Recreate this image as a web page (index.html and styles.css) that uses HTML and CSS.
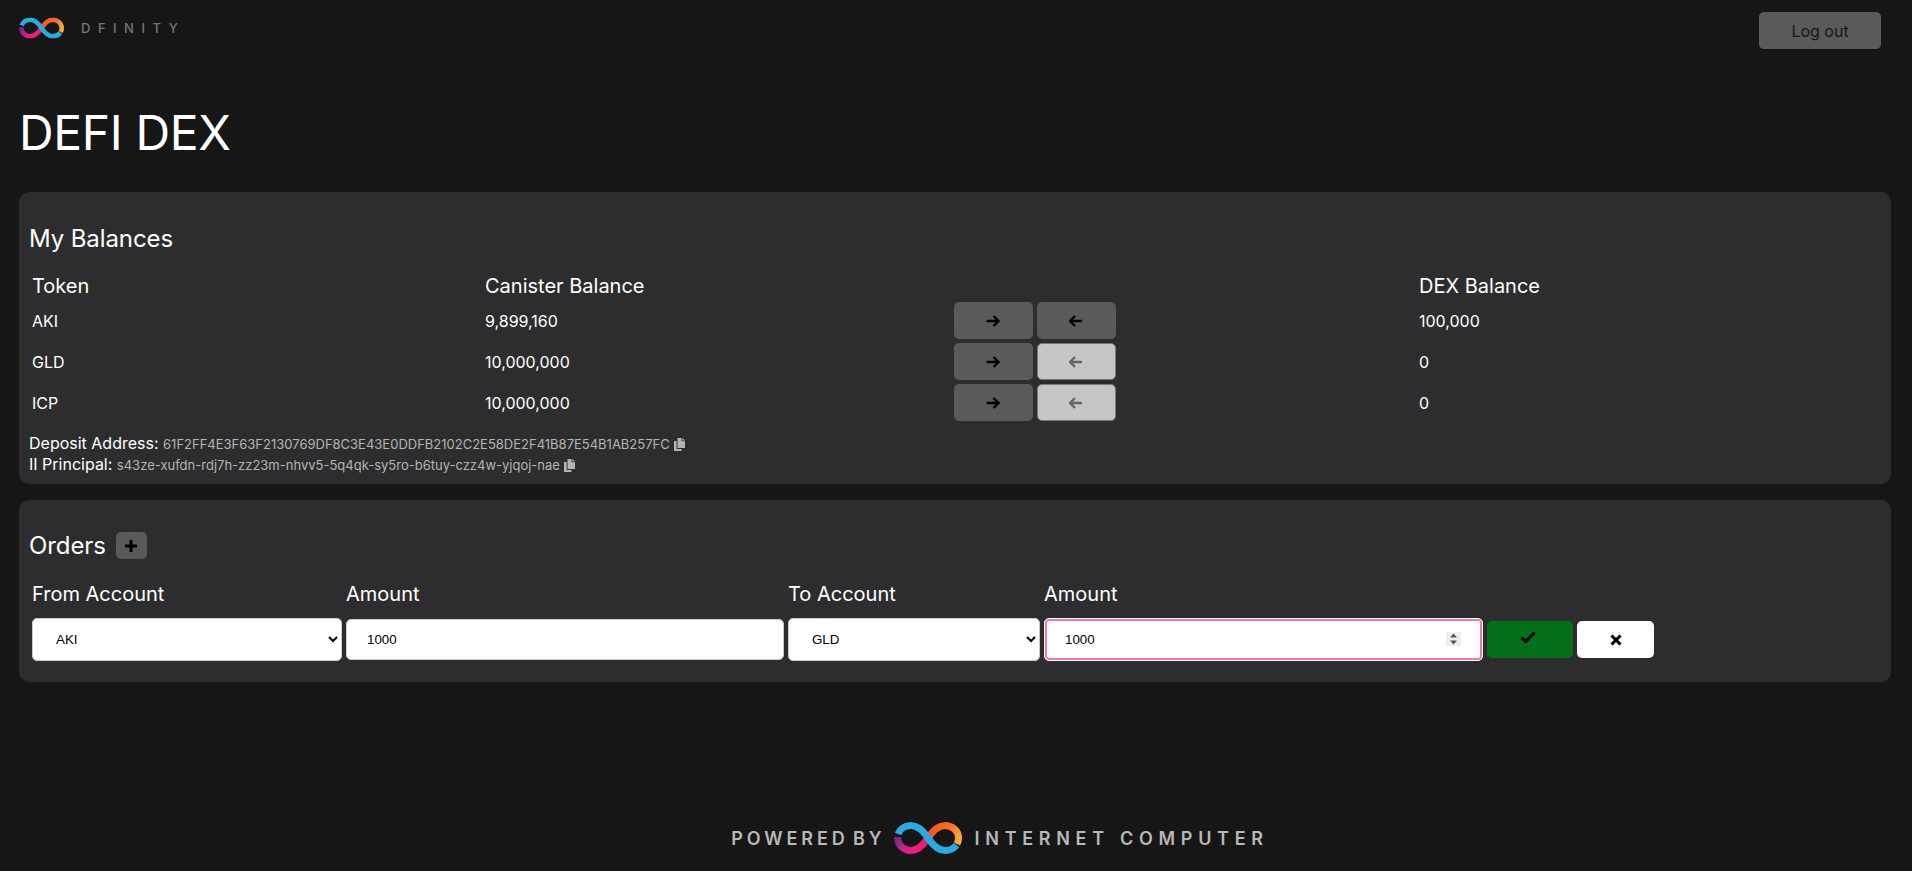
FILE: index.html
```html
<!DOCTYPE html>
<html>
    <head>
        <title>DEFI DEX</title>
        <link rel="stylesheet" href="styles.css">
    </head>
    <body>
        <header class="topbar">
            <div class="brand">
                <svg class="logo-small" viewBox="0 0 68 32">
                    <defs>
                        <linearGradient id="warm-left" gradientUnits="userSpaceOnUse" x1="3" y1="8" x2="26" y2="28">
                            <stop offset="0" stop-color="#522785"/>
                            <stop offset="0.55" stop-color="#c2258a"/>
                            <stop offset="0.8" stop-color="#ed1e79"/>
                        </linearGradient>
                        <linearGradient id="warm-right" gradientUnits="userSpaceOnUse" x1="38" y1="8" x2="65" y2="20">
                            <stop offset="0" stop-color="#f15a24"/>
                            <stop offset="0.55" stop-color="#f7702a"/>
                            <stop offset="1" stop-color="#fbb03b"/>
                        </linearGradient>
                        <symbol id="infinity" viewBox="0 0 68 32">
                            <path d="M3.500 15C3.500 23 9.500 28.500 17 28.500C25 28.500 30 22 34 16" fill="none" stroke="url(#warm-left)" stroke-width="7"/>
                            <path d="M34 16C38 10 43 3.500 51 3.500C58.500 3.500 64.500 9 64.500 16C64.500 18 64 20 63 22" fill="none" stroke="url(#warm-right)" stroke-width="7"/>
                            <path d="M4 12C6 7 11 3.500 17 3.500C25 3.500 30 10 34 16C38 22 43 28.500 51 28.500C56 28.500 60 26.500 62.500 23" fill="none" stroke="#29abe2" stroke-width="7"/>
                        </symbol>
                    </defs>
                    <use href="#infinity"/>
                </svg>
                <span class="brand-name">DFINITY</span>
            </div>
            <button class="btn logout">Log out</button>
        </header>

        <h1 class="title">DEFI DEX</h1>

        <section class="panel balances">
            <h2>My Balances</h2>
            <table class="balance-table">
                <colgroup>
                    <col class="col-token">
                    <col class="col-canister">
                    <col class="col-move">
                    <col>
                </colgroup>
                <thead>
                    <tr><th>Token</th><th>Canister Balance</th><th></th><th>DEX Balance</th></tr>
                </thead>
                <tbody>
                    <tr>
                        <td>AKI</td>
                        <td>9,899,160</td>
                        <td>
                            <div class="move">
                                <button class="btn move-btn"><svg class="arrow" viewBox="0 0 14 12"><path d="M0.500 6H12M7.500 1L12.500 6L7.500 11"/></svg></button>
                                <button class="btn move-btn"><svg class="arrow" viewBox="0 0 14 12"><path d="M13 6H1.500M6 1L1 6L6 11"/></svg></button>
                            </div>
                        </td>
                        <td>100,000</td>
                    </tr>
                    <tr>
                        <td>GLD</td>
                        <td>10,000,000</td>
                        <td>
                            <div class="move">
                                <button class="btn move-btn"><svg class="arrow" viewBox="0 0 14 12"><path d="M0.500 6H12M7.500 1L12.500 6L7.500 11"/></svg></button>
                                <button class="btn move-btn off"><svg class="arrow" viewBox="0 0 14 12"><path d="M13 6H1.500M6 1L1 6L6 11"/></svg></button>
                            </div>
                        </td>
                        <td>0</td>
                    </tr>
                    <tr>
                        <td>ICP</td>
                        <td>10,000,000</td>
                        <td>
                            <div class="move">
                                <button class="btn move-btn"><svg class="arrow" viewBox="0 0 14 12"><path d="M0.500 6H12M7.500 1L12.500 6L7.500 11"/></svg></button>
                                <button class="btn move-btn off"><svg class="arrow" viewBox="0 0 14 12"><path d="M13 6H1.500M6 1L1 6L6 11"/></svg></button>
                            </div>
                        </td>
                        <td>0</td>
                    </tr>
                </tbody>
            </table>
            <div class="ids">
                <div>Deposit Address: <span class="id-value">61F2FF4E3F63F2130769DF8C3E43E0DDFB2102C2E58DE2F41B87E54B1AB257FC</span>
                    <svg class="copy" viewBox="0 0 11 13"><path d="M3.500 0H7.500V3.200H11V10H3.500ZM8.300 0L11 2.400H8.300ZM0 3H2.600V11H7.500V13H0Z"/></svg></div>
                <div>II Principal: <span class="id-value">s43ze-xufdn-rdj7h-zz23m-nhvv5-5q4qk-sy5ro-b6tuy-czz4w-yjqoj-nae</span>
                    <svg class="copy" viewBox="0 0 11 13"><path d="M3.500 0H7.500V3.200H11V10H3.500ZM8.300 0L11 2.400H8.300ZM0 3H2.600V11H7.500V13H0Z"/></svg></div>
            </div>
        </section>

        <section class="panel orders">
            <div class="orders-head">
                <h2>Orders</h2>
                <button class="btn add"><svg class="plus" viewBox="0 0 14 14"><path d="M7 1V13M1 7H13"/></svg></button>
            </div>
            <form class="order-form">
                <label>From Account</label>
                <label>Amount</label>
                <label>To Account</label>
                <label class="wide">Amount</label>
                <select class="field"><option>AKI</option></select>
                <input class="field short" type="text" value="1000">
                <select class="field"><option>GLD</option></select>
                <input class="field focused" type="number" value="1000">
                <button class="btn ok" type="button"><svg class="check" viewBox="0 0 16 12"><path d="M1.500 6.500L5.800 10.500L14.500 1.500"/></svg></button>
                <button class="btn cancel" type="button"><svg class="cross" viewBox="0 0 12 12"><path d="M1.500 1.500L10.500 10.500M10.500 1.500L1.500 10.500"/></svg></button>
            </form>
        </section>

        <footer class="footer">
            <span class="powered">POWERED BY</span>
            <svg class="logo-big" viewBox="0 0 68 32"><use href="#infinity"/></svg>
            <span class="ic">INTERNET COMPUTER</span>
        </footer>
    </body>
</html>
```

FILE: styles.css
```css
html, body {
    margin: 0;
    height: 100%;
}

body {
    background: #161617;
    color: #fff;
    font-family: Inter, sans-serif;
    font-size: 16px;
    display: flex;
    flex-direction: column;
    min-height: 871px;
    box-sizing: border-box;
    padding: 0 21px 0 19px;
    overflow: hidden;
}

/* top bar */
.topbar {
    display: flex;
    justify-content: space-between;
    align-items: flex-start;
    height: 49px;
    padding: 12px 10px 0 0;
    box-sizing: border-box;
}

.brand {
    display: flex;
    align-items: center;
    margin-top: 5px;
}

.logo-small {
    width: 45px;
    height: 22px;
}

.brand-name {
    margin-left: 17px;
    color: #77777a;
    font-size: 13px;
    font-weight: 500;
    letter-spacing: 7.5px;
}

.btn {
    border: none;
    border-radius: 5px;
    background: #5a5a5a;
    color: #161617;
    padding: 0;
    display: flex;
    align-items: center;
    justify-content: center;
}

.logout {
    width: 122px;
    height: 37px;
    font-family: Inter, sans-serif;
    font-size: 16px;
}

.title {
    margin: 0;
    padding-top: 55px;
    font-size: 48px;
    font-weight: 400;
    line-height: 58px;
    letter-spacing: -0.35px;
}

/* panels */
.panel {
    background: #2d2d2f;
    border-radius: 10px;
    padding: 0 10px;
}

.panel h2 {
    margin: 0;
    font-size: 24px;
    font-weight: 400;
    line-height: 29px;
    letter-spacing: -0.1px;
}

.balances {
    margin-top: 30px;
    padding-top: 32px;
    padding-bottom: 9px;
    height: 292px;
    box-sizing: border-box;
}

.balance-table {
    width: 100%;
    margin-top: 18px;
    border-collapse: collapse;
    table-layout: fixed;
}

.col-token {
    width: 453px;
}

.col-canister {
    width: 469px;
}

.col-move {
    width: 465px;
}

.balance-table th {
    padding: 0 3px;
    height: 29px;
    font-size: 20px;
    font-weight: 400;
    text-align: left;
}

.balance-table td {
    padding: 2px 3px;
    height: 37px;
}

.move {
    display: flex;
    gap: 4px;
}

.move-btn {
    width: 79px;
    height: 37px;
}

.move-btn.off {
    background: #c6c6c6;
    border: 1px solid #77777a;
    box-sizing: border-box;
}

.arrow {
    width: 14px;
    height: 12px;
    fill: none;
    stroke: #000;
    stroke-width: 2.4;
    margin-right: 1px;
}

.off .arrow {
    stroke: #666;
}

.ids {
    margin-top: 11px;
    line-height: 19.5px;
}

.id-value {
    color: #b4b4b4;
    font-size: 13px;
}

.copy {
    width: 11px;
    height: 13px;
    fill: #b4b4b4;
    vertical-align: -2px;
}

/* orders */
.orders {
    margin-top: 16px;
    padding-top: 31px;
    height: 182px;
    box-sizing: border-box;
}

.orders-head {
    display: flex;
    align-items: center;
    gap: 10px;
}

.add {
    width: 31px;
    height: 27px;
}

.plus {
    width: 14px;
    height: 14px;
    fill: none;
    stroke: #000;
    stroke-width: 3;
}

.order-form {
    display: grid;
    grid-template-columns: 310px 438px 252px 439px 86px 77px;
    column-gap: 4px;
    align-items: center;
    padding-left: 3px;
    margin-top: 20px;
}

.order-form label {
    font-size: 20px;
    line-height: 29px;
    margin-bottom: 9px;
}

.order-form .wide {
    grid-column: 4 / 7;
}

.field {
    box-sizing: border-box;
    height: 43px;
    width: 100%;
    background: #fff;
    border: 1px solid #ccc;
    border-radius: 5px;
    color: #000;
    font-family: "Liberation Sans", sans-serif;
    font-size: 13.33px;
    padding: 0 0 0 19px;
}

.short {
    height: 41px;
    padding-left: 20px;
}

.focused {
    border-color: #fff;
    box-shadow: inset 0 0 0 2px #f178a8;
    padding: 0 21px 0 20px;
}

.focused::-webkit-inner-spin-button {
    -webkit-appearance: none;
    opacity: 1;
    width: 15px;
    height: 14px;
    background: #eee url("data:image/svg+xml,%3Csvg xmlns='http://www.w3.org/2000/svg' width='15' height='14'%3E%3Cpath d='M7.500 1.500L11 5.500H4ZM7.500 12.500L4 8.500H11Z' fill='%23555'/%3E%3C/svg%3E") no-repeat;
}

.ok {
    height: 37px;
    background: #046f1a;
}

.cancel {
    height: 37px;
    background: #fff;
}

.check {
    width: 16px;
    height: 12px;
    fill: none;
    stroke: #000;
    stroke-width: 3;
    margin: 0 4px 6px 0;
}

.cross {
    width: 12px;
    height: 12px;
    fill: none;
    stroke: #000;
    stroke-width: 3;
}

/* footer */
.footer {
    margin-top: auto;
    height: 66px;
    display: flex;
    align-items: center;
    justify-content: center;
    color: #b8b8b8;
    font-size: 18px;
    font-weight: 600;
    padding-left: 90px;
}

.powered {
    letter-spacing: 3.9px;
    word-spacing: -4px;
}

.logo-big {
    width: 68px;
    height: 32px;
    margin: 0 13px 0 8px;
}

.ic {
    letter-spacing: 5.7px;
}
```
